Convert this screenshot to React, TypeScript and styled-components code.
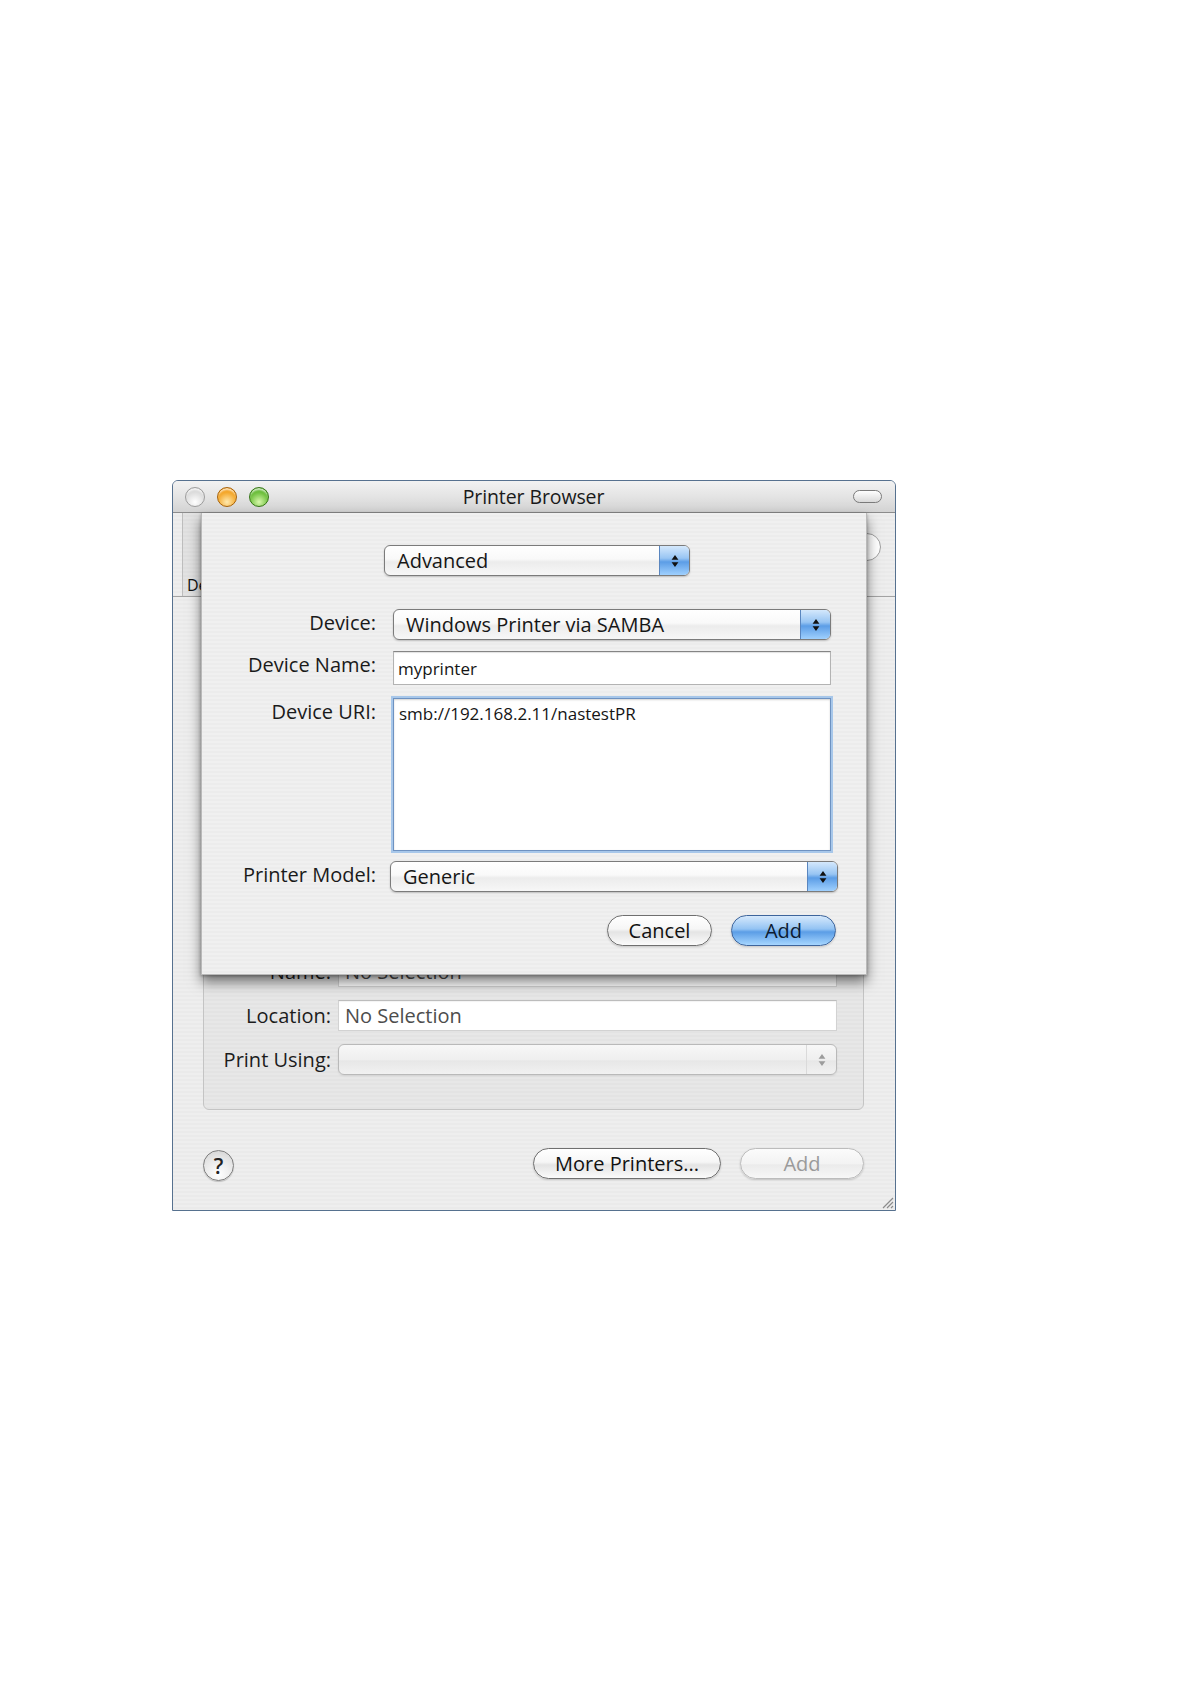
import styled, { createGlobalStyle, css } from 'styled-components';

const GlobalStyle = createGlobalStyle`
  html, body {
    margin: 0;
    background: #ffffff;
  }
  body {
    font-family: "Open Sans", "Liberation Sans", sans-serif;
    color: #1c1c1c;
  }
  * {
    box-sizing: border-box;
  }
`;

const pinstripe = (a: string, b: string) => css`
  background: repeating-linear-gradient(180deg, ${a} 0px, ${a} 2px, ${b} 2px, ${b} 4px);
`;

const Page = styled.div`
  min-height: 1684px;
  padding: 480px 0 0 172px;
`;

const Window = styled.div`
  position: relative;
  width: 724px;
  height: 731px;
  border: 1px solid #56718f;
  border-radius: 6px 6px 0 0;
  display: flex;
  flex-direction: column;
  overflow: hidden;
  ${pinstripe('#eeeeee', '#eaeaea')}
`;

const TitleBar = styled.div`
  flex: none;
  height: 32px;
  display: grid;
  grid-template-columns: 1fr auto 1fr;
  align-items: center;
  padding: 0 13px 0 12px;
  background: linear-gradient(180deg, #f2f2f2 0%, #e4e4e4 50%, #d3d3d3 100%);
  border-bottom: 1px solid #8c8c8c;
`;

const Lights = styled.div`
  display: flex;
  gap: 12px;
`;

const lightColors = {
  close: ['#ffffff', '#d6d6d6', '#9d9d9d'],
  min: ['#ffeab0', '#f29a10', '#a8630a'],
  zoom: ['#d8f8ac', '#58b426', '#367617'],
};

const Light = styled.span<{ $kind: keyof typeof lightColors }>`
  width: 20px;
  height: 20px;
  border-radius: 50%;
  border: 1px solid ${p => lightColors[p.$kind][2]};
  background: radial-gradient(circle at 50% 78%, ${p => lightColors[p.$kind][0]} 0%, ${p => lightColors[p.$kind][1]} 70%);
  box-shadow: inset 0 3px 2px -1px rgba(255, 255, 255, 0.75);
`;

const Title = styled.div`
  font-size: 19.5px;
  color: #1a1a1a;
  letter-spacing: -0.1px;
`;

const ToolbarToggle = styled.span`
  justify-self: end;
  width: 29px;
  height: 13px;
  border-radius: 7px;
  border: 1px solid #7b7b7b;
  background: linear-gradient(180deg, #ffffff, #d9d9d9);
`;

const Body = styled.div`
  position: relative;
  flex: 1;
  display: flex;
  flex-direction: column;
`;

const Toolbar = styled.div`
  flex: none;
  height: 84px;
  display: flex;
  padding: 0 14px 0 9px;
  border-bottom: 1px solid #a3a3a3;
`;

const ToolbarItem = styled.div<{ $selected?: boolean }>`
  width: 132px;
  display: flex;
  align-items: flex-end;
  padding: 0 0 1px 4px;
  font-size: 16px;
  line-height: 20px;
  color: #111;
  white-space: nowrap;
  ${p => p.$selected && css`
    background: rgba(0, 0, 0, 0.045);
    border-left: 1px solid #bdbdbd;
    border-right: 1px solid #bdbdbd;
  `}
`;

const SearchField = styled.div`
  margin: 20px 0 0 auto;
  width: 160px;
  height: 28px;
  border-radius: 14px;
  border: 1px solid #a0a0a0;
  background: #ffffff;
`;

const PrinterList = styled.div`
  flex: 1;
  margin: 12px 31px 12px 30px;
  background: #ffffff;
  border: 1px solid #a5a5a5;
`;

const GroupBox = styled.div`
  flex: none;
  height: 170px;
  margin: 0 31px 0 30px;
  padding: 15px 26px 0 0;
  border: 1px solid #c4c4c4;
  border-radius: 6px;
  background: rgba(0, 0, 0, 0.028);
  display: grid;
  grid-template-columns: 127px 1fr;
  grid-auto-rows: 31px;
  column-gap: 7px;
  row-gap: 13px;
  align-items: center;
`;

const GroupLabel = styled.div`
  text-align: right;
  font-size: 20px;
  color: #1c1c1c;
`;

const TextField = styled.div<{ $small?: boolean; $muted?: boolean }>`
  height: ${p => (p.$small ? 34 : 31)}px;
  display: flex;
  align-items: center;
  padding: 0 ${p => (p.$small ? 4 : 6)}px;
  background: #ffffff;
  border: 1px solid ${p => (p.$muted ? '#d2d2d2' : '#b3b3b3')};
  border-top-color: ${p => (p.$muted ? '#bcbcbc' : '#858585')};
  box-shadow: inset 0 1px 1px rgba(0, 0, 0, ${p => (p.$muted ? 0.05 : 0.12)});
  font-size: ${p => (p.$small ? 17 : 20)}px;
  color: ${p => (p.$muted ? '#4d4d4d' : '#151515')};
  white-space: nowrap;
`;

const BottomBar = styled.div`
  flex: none;
  height: 100px;
  display: flex;
  align-items: flex-start;
  gap: 19px;
  padding: 38px 31px 0 30px;
`;

const HelpButton = styled.div`
  width: 31px;
  height: 31px;
  margin: 2px auto 0 0;
  border-radius: 50%;
  border: 1px solid #7e7e7e;
  background: radial-gradient(circle at 50% 80%, #ffffff 0%, #e6e6e6 60%, #cfcfcf 100%);
  box-shadow: 0 1px 1px rgba(0, 0, 0, 0.2);
  display: flex;
  align-items: center;
  justify-content: center;
  font-size: 21px;
  font-weight: 600;
  color: #222;
`;

type ButtonKind = 'normal' | 'default' | 'disabled';

const buttonLooks: Record<ButtonKind, ReturnType<typeof css>> = {
  normal: css`
    border: 1px solid #6f6f6f;
    background: linear-gradient(180deg, #ffffff 0%, #f6f6f6 45%, #e4e4e4 55%, #fbfbfb 100%);
    color: #111;
  `,
  default: css`
    border: 1px solid #3e659c;
    background: linear-gradient(180deg, #d6e9fc 0%, #93c3f3 45%, #5b9de6 55%, #a6d6ff 100%);
    color: #0d1b31;
  `,
  disabled: css`
    border: 1px solid #bcbcbc;
    background: linear-gradient(180deg, #fbfbfb 0%, #f3f3f3 50%, #ebebeb 55%, #f7f7f7 100%);
    color: #9a9a9a;
  `,
};

const PushButton = styled.div<{ $kind?: ButtonKind; $w: number }>`
  width: ${p => p.$w}px;
  height: 31px;
  border-radius: 16px;
  display: flex;
  align-items: center;
  justify-content: center;
  font-size: 20px;
  box-shadow: 0 1px 2px rgba(0, 0, 0, 0.18);
  ${p => buttonLooks[p.$kind ?? 'normal']}
`;

const Sheet = styled.div`
  position: absolute;
  top: 0;
  left: 28px;
  width: 666px;
  height: 462px;
  padding: 32px 0 29px;
  display: flex;
  flex-direction: column;
  ${pinstripe('#f0f0f0', '#ececec')}
  border: 1px solid #b9b9b9;
  border-top: none;
  box-shadow: 0 7px 12px rgba(0, 0, 0, 0.5), 0 1px 3px rgba(0, 0, 0, 0.3);
`;

const ModeRow = styled.div`
  padding-left: 182px;
`;

const FormRow = styled.div<{ $gap: number }>`
  display: grid;
  grid-template-columns: 174px 1fr;
  column-gap: 17px;
  align-items: start;
  padding-right: 35px;
  margin-top: ${p => p.$gap}px;
`;

const FormLabel = styled.div`
  text-align: right;
  font-size: 20px;
  line-height: 27px;
  color: #1a1a1a;
  white-space: nowrap;
`;

const Popup = styled.div<{ $w?: number; $bleed?: boolean; $disabled?: boolean }>`
  width: ${p => (p.$w ? `${p.$w}px` : 'auto')};
  height: 31px;
  display: flex;
  border-radius: 6px;
  overflow: hidden;
  border: 1px solid ${p => (p.$disabled ? '#b9b9b9' : '#7b7b7b')};
  background: ${p =>
    p.$disabled
      ? 'linear-gradient(180deg, #f7f7f7 0%, #efefef 50%, #e7e7e7 55%, #f1f1f1 100%)'
      : 'linear-gradient(180deg, #ffffff 0%, #f9f9f9 45%, #ececec 55%, #f7f7f7 100%)'};
  box-shadow: 0 1px 2px rgba(0, 0, 0, ${p => (p.$disabled ? 0.08 : 0.2)});
  ${p => p.$bleed && css`margin: 0 -7px 0 -3px;`}
`;

const PopupText = styled.div`
  flex: 1;
  display: flex;
  align-items: center;
  padding-left: 12px;
  font-size: 20px;
  color: #161616;
  white-space: nowrap;
`;

const PopupArrows = styled.div<{ $disabled?: boolean }>`
  flex: none;
  width: 30px;
  display: flex;
  align-items: center;
  justify-content: center;
  ${p =>
    p.$disabled
      ? css`
          border-left: 1px solid #dadada;
        `
      : css`
          border-left: 1px solid #5a86bf;
          background: linear-gradient(180deg, #d4e8fc 0%, #98c5f3 42%, #5c9de6 55%, #9fd0fe 100%);
        `}
`;

const UriBox = styled.div`
  height: 153px;
  padding: 4px 5px;
  background: #ffffff;
  border: 1px solid #6e92c1;
  box-shadow: 0 0 0 2px #a7c7ea, inset 0 1px 2px rgba(0, 0, 0, 0.18);
  font-size: 17px;
  line-height: 22px;
  color: #151515;
`;

const ButtonRow = styled.div`
  display: flex;
  justify-content: flex-end;
  gap: 19px;
  padding-right: 30px;
  margin-top: 23px;
`;

const Grip = styled.svg`
  position: absolute;
  right: 1px;
  bottom: 1px;
`;

const Arrows = ({ color = '#111' }: { color?: string }) => (
  <svg width="8" height="16" viewBox="0 0 8 16">
    <path d="M4 2 L7.4 6.8 H0.6 Z M4 14 L7.4 9.2 H0.6 Z" fill={color} />
  </svg>
);

const PopupButton = ({ label, w, bleed, disabled }: { label: string; w?: number; bleed?: boolean; disabled?: boolean }) => (
  <Popup $w={w} $bleed={bleed} $disabled={disabled}>
    <PopupText>{label}</PopupText>
    <PopupArrows $disabled={disabled}>
      <Arrows color={disabled ? '#9c9c9c' : '#111'} />
    </PopupArrows>
  </Popup>
);

export default function App() {
  return (
    <Page>
      <GlobalStyle />
      <Window>
        <TitleBar>
          <Lights>
            <Light $kind="close" />
            <Light $kind="min" />
            <Light $kind="zoom" />
          </Lights>
          <Title>Printer Browser</Title>
          <ToolbarToggle />
        </TitleBar>

        <Body>
          <Toolbar>
            <ToolbarItem $selected>Default Browser</ToolbarItem>
            <SearchField />
          </Toolbar>

          <PrinterList />

          <GroupBox>
            <GroupLabel>Name:</GroupLabel>
            <TextField $muted>No Selection</TextField>
            <GroupLabel>Location:</GroupLabel>
            <TextField $muted>No Selection</TextField>
            <GroupLabel>Print Using:</GroupLabel>
            <PopupButton label="" disabled />
          </GroupBox>

          <BottomBar>
            <HelpButton>?</HelpButton>
            <PushButton $w={188}>More Printers...</PushButton>
            <PushButton $w={124} $kind="disabled">Add</PushButton>
          </BottomBar>

          <Sheet>
            <ModeRow>
              <PopupButton label="Advanced" w={306} />
            </ModeRow>

            <FormRow $gap={33}>
              <FormLabel>Device:</FormLabel>
              <PopupButton label="Windows Printer via SAMBA" />
            </FormRow>

            <FormRow $gap={11}>
              <FormLabel>Device Name:</FormLabel>
              <TextField $small>myprinter</TextField>
            </FormRow>

            <FormRow $gap={13}>
              <FormLabel>Device URI:</FormLabel>
              <UriBox>smb://192.168.2.11/nastestPR</UriBox>
            </FormRow>

            <FormRow $gap={10}>
              <FormLabel>Printer Model:</FormLabel>
              <PopupButton label="Generic" bleed />
            </FormRow>

            <ButtonRow>
              <PushButton $w={105}>Cancel</PushButton>
              <PushButton $w={105} $kind="default">Add</PushButton>
            </ButtonRow>
          </Sheet>
        </Body>

        <Grip width="14" height="14" viewBox="0 0 14 14">
          <path d="M13 3 L3 13 M13 7 L7 13 M13 11 L11 13" stroke="#8c8c8c" strokeWidth="1.2" />
        </Grip>
      </Window>
    </Page>
  );
}
